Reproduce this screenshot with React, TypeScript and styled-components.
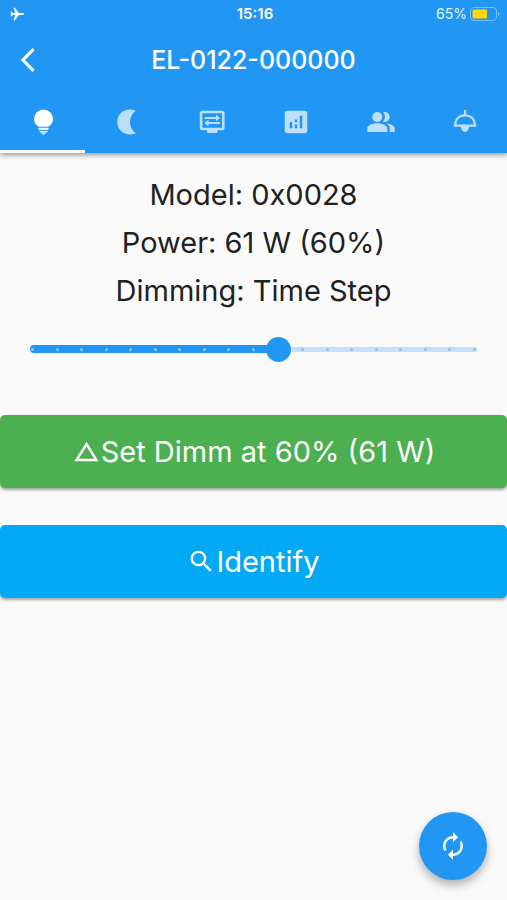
import React, { useState } from "react";
import styled, { createGlobalStyle } from "styled-components";
import {
  MdAnalytics,
  MdAutorenew,
  MdChangeHistory,
  MdPeopleAlt,
  MdSearch,
} from "react-icons/md";

const GlobalStyle = createGlobalStyle`
  * { box-sizing: border-box; }
  body {
    margin: 0;
    background: #fafafa;
    color: #212121;
    font-family: Inter, "Liberation Sans", sans-serif;
  }
  button { font-family: inherit; border: 0; padding: 0; cursor: pointer; }
`;

const Screen = styled.div`
  min-height: 100vh;
  display: flex;
  flex-direction: column;
`;

const AppBar = styled.header`
  background: #2196f3;
  color: #fff;
  box-shadow: 0 2px 5px rgba(0, 0, 0, 0.4);
`;

const StatusBar = styled.div`
  height: 27px;
  padding: 0 7px 0 10px;
  display: grid;
  grid-template-columns: 1fr auto 1fr;
  align-items: center;
  font-size: 14px;
`;

const Clock = styled.span`
  font-size: 15px;
  font-weight: 600;
`;

const Battery = styled.span`
  display: flex;
  justify-content: flex-end;
  align-items: center;
  gap: 3px;
  color: #e3f2fd;
`;

const TitleRow = styled.div`
  height: 65px;
  padding: 0 12px;
  display: grid;
  grid-template-columns: 32px 1fr 32px;
  align-items: center;
`;

const BackButton = styled.button`
  height: 48px;
  display: grid;
  place-items: center;
  background: none;
  color: inherit;
`;

const Title = styled.h1`
  margin: 0;
  text-align: center;
  font-size: 25px;
  font-weight: 500;
`;

const Tabs = styled.nav`
  display: grid;
  grid-template-columns: repeat(6, 1fr);
`;

const Tab = styled.button<{ $active: boolean }>`
  height: 61px;
  padding: 2px 0 0 1px;
  display: grid;
  place-items: center;
  background: none;
  color: ${(p) => (p.$active ? "#fff" : "#bcdffb")};
  border-bottom: 3px solid ${(p) => (p.$active ? "#fff" : "transparent")};
`;

const Main = styled.main`
  padding-top: 18px;
`;

const Reading = styled.p`
  margin: 0;
  height: 48px;
  line-height: 48px;
  text-align: center;
  font-size: 29px;
`;

const SliderArea = styled.div`
  height: 48px;
  margin: 10px 20px 0;
  display: grid;
  align-items: center;
  > * { grid-area: 1 / 1; }
`;

const Track = styled.div`
  height: 5px;
  margin: 0 10px;
  border-radius: 3px;
  background: #c3e0f8;
  display: flex;
  align-items: center;
`;

const TrackFill = styled.div`
  height: 8px;
  border-radius: 4px;
  background: #2196f3;
`;

const Ticks = styled.div`
  margin: 0 11px;
  display: flex;
  justify-content: space-between;
`;

const Tick = styled.span<{ $filled: boolean }>`
  width: 3px;
  height: 3px;
  border-radius: 50%;
  background: ${(p) => (p.$filled ? "#8ecaf9" : "#86c0ec")};
`;

const Range = styled.input`
  appearance: none;
  width: 100%;
  height: 48px;
  margin: 0;
  background: transparent;
  cursor: pointer;
  &::-webkit-slider-thumb {
    appearance: none;
    width: 25px;
    height: 25px;
    border-radius: 50%;
    background: #2196f3;
  }
  &::-moz-range-thumb {
    width: 25px;
    height: 25px;
    border: 0;
    border-radius: 50%;
    background: #2196f3;
  }
`;

const Actions = styled.div`
  margin-top: 42px;
  display: grid;
  gap: 37px;
`;

const ActionButton = styled.button<{ $color: string }>`
  height: 73px;
  display: flex;
  align-items: center;
  justify-content: center;
  border-radius: 5px;
  background: ${(p) => p.$color};
  color: #fff;
  font-size: 29px;
  box-shadow: 0 2px 3px rgba(0, 0, 0, 0.35);
`;

const RefreshButton = styled.button`
  width: 68px;
  height: 68px;
  margin: auto 20px 20px auto;
  display: grid;
  place-items: center;
  border-radius: 50%;
  background: #2196f3;
  color: #fff;
  box-shadow: 0 5px 10px rgba(0, 0, 0, 0.3);
`;

const PlaneIcon = () => (
  <svg width="14" height="14" viewBox="0 0 14 14" fill="currentColor" aria-label="Airplane mode">
    <path d="M14 7c0-.6-.7-1-1.500-1H8.800L4.900.8H3.500L5.300 6H2.800L1.500 4.400H.5L1 7l-.5 2.600h1L2.800 8h2.500L3.500 13.200h1.400L8.800 8h3.700c.8 0 1.500-.4 1.500-1z" />
  </svg>
);

const BackIcon = () => (
  <svg width="28" height="28" viewBox="0 0 28 28" fill="none" stroke="currentColor" strokeWidth="3.200">
    <path d="M19.500 3.200 9 14l10.500 10.800" />
  </svg>
);

const BatteryIcon = () => (
  <svg width="30" height="14" viewBox="0 0 30 14" aria-hidden="true">
    <rect x=".5" y=".5" width="26" height="13" rx="3.500" fill="none" stroke="#79bff7" />
    <rect x="2.500" y="2.500" width="14.500" height="9" rx="1.500" fill="#ffd60a" />
    <path d="M28 5c2 .8 2 3.200 0 4z" fill="#79bff7" />
  </svg>
);

const BulbIcon = () => (
  <svg width="28" height="28" viewBox="0 0 28 28" fill="currentColor">
    <path d="M14.500 1.500a9.500 9.500 0 0 0-9.500 9.500c0 3.600 2.300 6.500 5 7.800h9c2.700-1.300 5-4.200 5-7.800a9.500 9.500 0 0 0-9.500-9.500z" />
    <path d="M9.500 19.800h10v1.300c0 .5-.4.900-.9.900h-8.200c-.5 0-.9-.4-.9-.9zM10.500 22.900h8c0 1-.7 1.500-1.600 1.500h-4.800c-.9 0-1.600-.5-1.600-1.500zM12.500 25h4c-.3 1-1 1.500-2 1.500s-1.700-.5-2-1.500z" />
  </svg>
);

const MoonIcon = () => (
  <svg width="28" height="28" viewBox="0 0 28 28" fill="currentColor">
    <path d="M22.800 2.800C19 5.500 17 9.500 17 14s2 8.500 5.800 11.200C14 29.200 4.200 23.500 4.200 14S14-1.200 22.800 2.800z" />
  </svg>
);

const DisplaySettingsIcon = () => (
  <svg width="28" height="28" viewBox="0 0 28 28" fill="currentColor">
    <path fillRule="evenodd" d="M4.200 2.700h20c1.400 0 2.400 1 2.400 2.300v15c0 1.300-1 2.300-2.400 2.300h-4.600v1.500c0 .7-.5 1.200-1.200 1.200h-8.200c-.7 0-1.200-.5-1.200-1.200v-1.500H4.200c-1.400 0-2.400-1-2.400-2.300V5c0-1.300 1-2.300 2.400-2.300zM4.400 5.300v14.400H24V5.300z" />
    <path d="M6.500 8.900H18V6.700l4.200 3.300-4.200 3.300v-2.200H6.500zM21.800 13.900H10.500v-2.200L6.300 15l4.200 3.300v-2.200h11.300z" />
  </svg>
);

const LampIcon = () => (
  <svg width="28" height="28" viewBox="0 0 28 28" fill="none" stroke="currentColor" strokeWidth="2.200">
    <path d="M14 2v5" />
    <path strokeLinejoin="round" d="M4.200 17.600C4.200 11 8 7.300 14 7.300s9.800 3.700 9.800 10.300z" />
    <path d="M9.800 18h8.400a4.200 6 0 0 1-8.400 0z" fill="currentColor" stroke="none" />
    <circle cx="4.200" cy="17.300" r="1.500" fill="currentColor" stroke="none" />
    <circle cx="23.800" cy="17.300" r="1.500" fill="currentColor" stroke="none" />
  </svg>
);

const tabs = [
  { label: "Light", icon: <BulbIcon /> },
  { label: "Night", icon: <MoonIcon /> },
  { label: "Settings", icon: <DisplaySettingsIcon /> },
  { label: "Statistics", icon: <MdAnalytics size={30} /> },
  { label: "Groups", icon: <MdPeopleAlt size={30} /> },
  { label: "Lamp", icon: <LampIcon /> },
];

const MIN = 10;
const MAX = 100;
const STEP = 5;
const levels = Array.from({ length: (MAX - MIN) / STEP + 1 }, (_, i) => MIN + i * STEP);

export default function App() {
  const [tab, setTab] = useState(0);
  const [level, setLevel] = useState(60);
  const watts = Math.round((level * 61) / 60);
  const fill = ((level - MIN) / (MAX - MIN)) * 100;

  return (
    <Screen>
      <GlobalStyle />
      <AppBar>
        <StatusBar>
          <PlaneIcon />
          <Clock>15:16</Clock>
          <Battery>65%<BatteryIcon /></Battery>
        </StatusBar>
        <TitleRow>
          <BackButton aria-label="Back"><BackIcon /></BackButton>
          <Title>EL-0122-000000</Title>
        </TitleRow>
        <Tabs>
          {tabs.map((t, i) => (
            <Tab key={t.label} $active={i === tab} aria-label={t.label} onClick={() => setTab(i)}>
              {t.icon}
            </Tab>
          ))}
        </Tabs>
      </AppBar>
      <Main>
        <Reading>Model: 0x0028</Reading>
        <Reading>Power: 61 W (60%)</Reading>
        <Reading>Dimming: Time Step</Reading>
        <SliderArea>
          <Track><TrackFill style={{ width: `${fill}%` }} /></Track>
          <Ticks>
            {levels.map((v) => <Tick key={v} $filled={v <= level} />)}
          </Ticks>
          <Range
            type="range"
            aria-label="Dimming level"
            min={MIN}
            max={MAX}
            step={STEP}
            value={level}
            onChange={(e) => setLevel(Number(e.target.value))}
          />
        </SliderArea>
        <Actions>
          <ActionButton $color="#4caf50">
            <MdChangeHistory size={29} />
            <span>Set Dimm at {level}% ({watts} W)</span>
          </ActionButton>
          <ActionButton $color="#03a9f4">
            <MdSearch size={29} />
            <span>Identify</span>
          </ActionButton>
        </Actions>
      </Main>
      <RefreshButton aria-label="Refresh"><MdAutorenew size={30} /></RefreshButton>
    </Screen>
  );
}
